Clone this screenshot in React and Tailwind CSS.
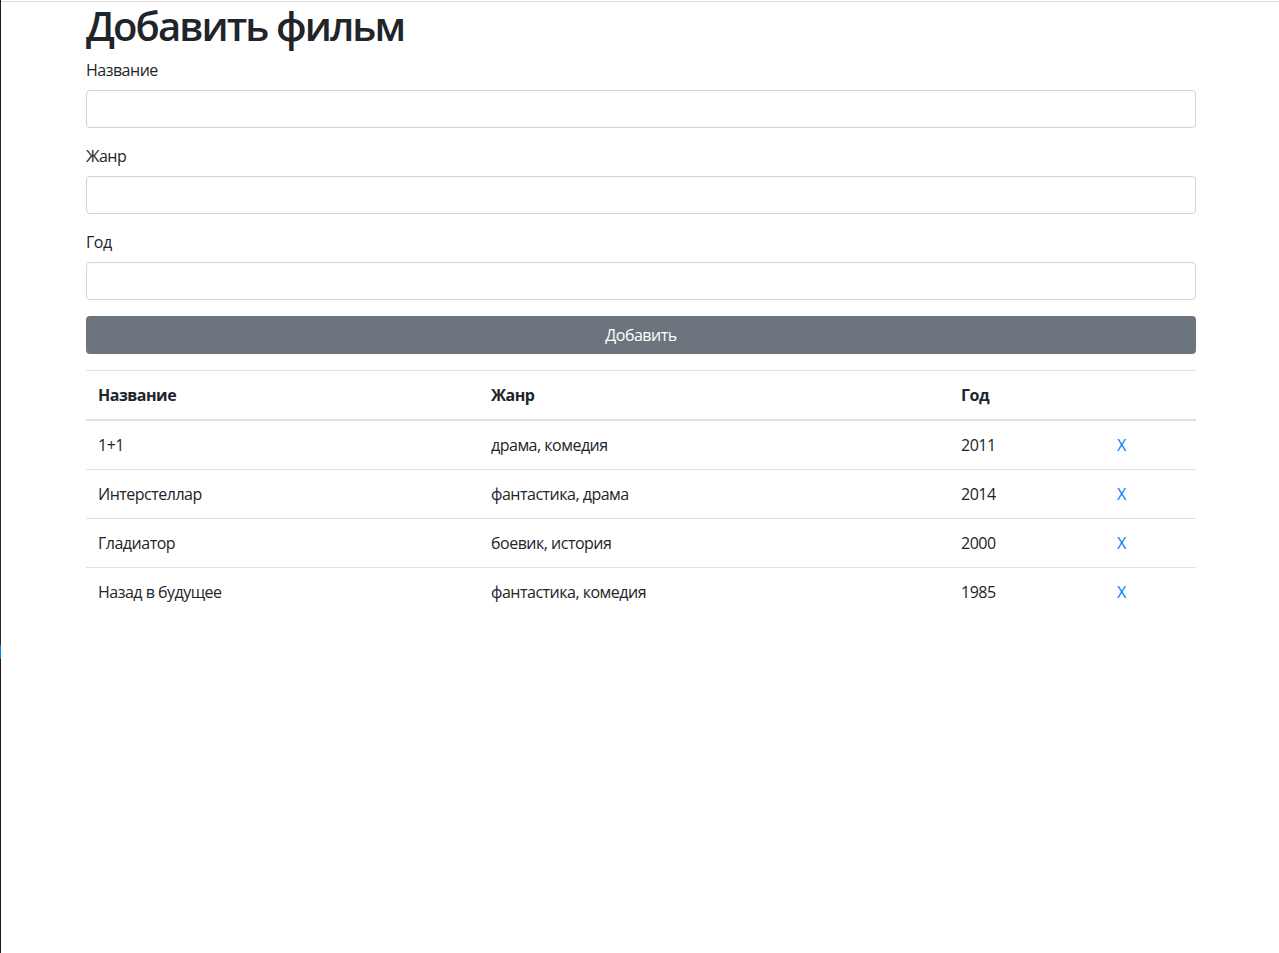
import React from "react";

const films = [
  { name: "1+1", genre: "драма, комедия", year: "2011" },
  { name: "Интерстеллар", genre: "фантастика, драма", year: "2014" },
  { name: "Гладиатор", genre: "боевик, история", year: "2000" },
  { name: "Назад в будущее", genre: "фантастика, комедия", year: "1985" },
];

function Field({ label }) {
  return (
    <div className="mb-4">
      <label className="block mb-2 text-base leading-6">{label}</label>
      <input
        type="text"
        className="block w-full h-[38px] px-3 border border-[#ced4da] rounded-[4px] bg-white text-base outline-none"
      />
    </div>
  );
}

export default function App() {
  return (
    <div
      className="flex min-h-[953px] bg-white text-[#212529] tracking-[-0.5px]"
      style={{ fontFamily: '"Open Sans", "Noto Sans", sans-serif' }}
    >
      <div className="w-px flex flex-col shrink-0">
        <div className="h-[120px] bg-[#1c1c1c]" />
        <div className="h-[525px] bg-[#2a2a2a]" />
        <div className="h-[14px] bg-[#0a84d8]" />
        <div className="flex-1 bg-[#1c1c1c]" />
      </div>
      <div className="flex-1 flex flex-col">
        <div className="h-px bg-white" />
        <div className="h-px bg-[#dcdcdc]" />
        <div className="w-[1110px] ml-[85px]">
          <h1 className="text-[40px] leading-[48px] font-semibold tracking-[-1.9px] mb-2">Добавить фильм</h1>
          <Field label="Название" />
          <Field label="Жанр" />
          <Field label="Год" />
          <button className="block w-full h-[38px] mb-4 rounded-[4px] bg-[#6c757d] text-white text-base leading-6">
            Добавить
          </button>
          <table className="w-full border-collapse text-base leading-6">
            <thead>
              <tr>
                <th className="w-[393px] text-left font-bold p-3 border-t border-[#dee2e6] border-b-2">Название</th>
                <th className="w-[470px] text-left font-bold p-3 border-t border-[#dee2e6] border-b-2">Жанр</th>
                <th className="w-[156px] text-left font-bold p-3 border-t border-[#dee2e6] border-b-2">Год</th>
                <th className="text-left font-bold p-3 border-t border-[#dee2e6] border-b-2"></th>
              </tr>
            </thead>
            <tbody>
              {films.map((f) => (
                <tr key={f.name}>
                  <td className="p-3 border-t border-[#dee2e6]">{f.name}</td>
                  <td className="p-3 border-t border-[#dee2e6]">{f.genre}</td>
                  <td className="p-3 border-t border-[#dee2e6]">{f.year}</td>
                  <td className="p-3 border-t border-[#dee2e6]">
                    <a href="#" className="text-[#007bff]">X</a>
                  </td>
                </tr>
              ))}
            </tbody>
          </table>
        </div>
      </div>
    </div>
  );
}
